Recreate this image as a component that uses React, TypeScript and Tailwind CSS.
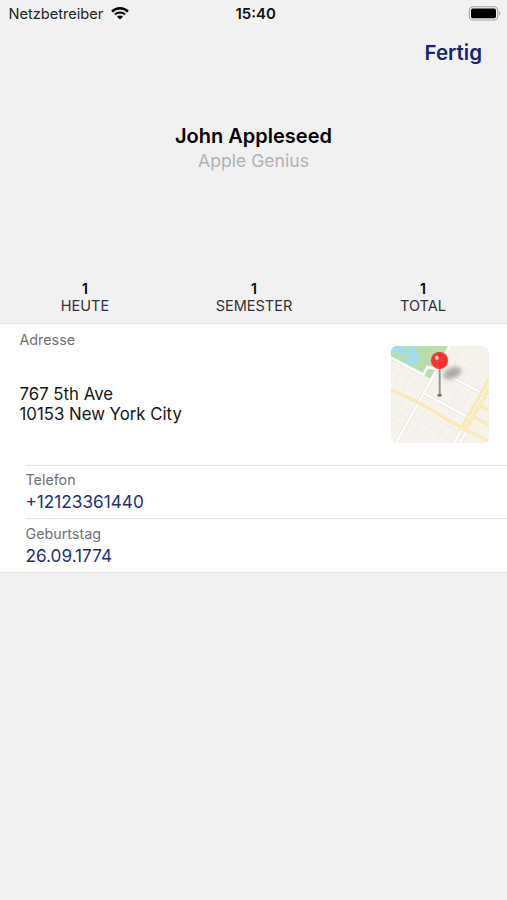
import clsx from "clsx";

interface StatProps {
  value: number;
  label: string;
}

interface DetailRowProps {
  label: string;
  value: string;
  className?: string;
}

const stats: StatProps[] = [
  { value: 1, label: "HEUTE" },
  { value: 1, label: "SEMESTER" },
  { value: 1, label: "TOTAL" },
];

const whiteRoads =
  "M210 33 48 323M33 68 130 119 142 96 166 101 326 184M134 176 270 250M222 323 247 277M240 323 260 285";
const avenues =
  "M33 165Q130 204 207 257L326 319M326 132 240 285M326 162 253 290M298 211 326 226M280 244 326 269";

const WifiIcon: React.FC = () => (
  <svg className="mb-0.5" width="18" height="13" viewBox="0 0 18 13" fill="none">
    <path d="M1 4.6a11.2 11.2 0 0 1 16 0" stroke="#000" strokeWidth="2.3" />
    <path d="M3.9 7.6a7.2 7.2 0 0 1 10.2 0" stroke="#000" strokeWidth="2.1" />
    <path d="M9 12.6 6 9.7a4.2 4.2 0 0 1 6 0z" fill="#000" />
  </svg>
);

const BatteryIcon: React.FC = () => (
  <svg className="mb-0.5" width="33" height="15" viewBox="0 0 33 15" fill="none">
    <rect x="1.3" y="0.8" width="28.4" height="13.2" rx="3.6" fill="#f1f1f1" stroke="#a3a3a3" strokeWidth="1.1" />
    <rect x="3" y="2.6" width="25" height="9.6" rx="1.8" fill="#000" />
    <path d="M31 5.2c1.5.5 1.5 3.9 0 4.4z" fill="#a3a3a3" />
  </svg>
);

const MapPreview: React.FC = () => (
  <svg className="w-[98px] h-[97px] rounded-md" viewBox="33 33 293 290" preserveAspectRatio="none">
    <defs>
      <filter id="pinShadow" x="-50%" y="-50%" width="200%" height="200%">
        <feGaussianBlur stdDeviation="7" />
      </filter>
    </defs>
    <rect x="33" y="33" width="293" height="290" fill="#f6f3ed" />
    {/* park and pond */}
    <path d="M33 33H202L150 130 33 68z" fill="#b8deaa" />
    <path d="M33 33H64L70 43Q78 50 84 42L91 33H108Q107 45 113 57Q122 70 115 81Q105 94 91 87Q75 82 69 74Q72 63 82 68Q92 68 85 58Q73 52 65 60L33 47z" fill="#9fdcee" />
    {/* small streets */}
    <g stroke="#eae7e0" strokeWidth="1.5" fill="none">
      <path d="M222 35 326 89M218 60 323 116M207 82 310 140M33 106 120 151M33 132 101 168M33 196 88 226M33 221 77 245M33 251 64 268M117 225 236 289M103 251 209 308M88 278 168 322" />
      <path d="M246 33 216 99M292 48 248 137M70 89 36 157M99 105 56 187M73 190 33 269M106 208 55 310M139 222 87 322M170 240 129 322M202 258 169 322M213 121 171 205M245 138 202 223M277 156 237 238" />
    </g>
    <path d={whiteRoads} stroke="#e3e0da" strokeWidth="10" fill="none" />
    <path d={whiteRoads} stroke="#fff" strokeWidth="7" fill="none" />
    <path d={avenues} stroke="#f3d68c" strokeWidth="8" fill="none" />
    <path d={avenues} stroke="#fff0bc" strokeWidth="5" fill="none" />
    {/* pin */}
    <ellipse cx="216" cy="114" rx="29" ry="16" transform="rotate(-22 216 114)" fill="#555" opacity="0.45" filter="url(#pinShadow)" />
    <ellipse cx="178" cy="180" rx="7" ry="4.5" fill="#74716d" />
    <path d="M178.5 98V179" stroke="#77787a" strokeWidth="5" />
    <path d="M177.5 98V177" stroke="#b9babb" strokeWidth="1.5" />
    <circle cx="178" cy="76" r="25.5" fill="#fb342e" />
    <circle cx="170" cy="68" r="6" fill="#fff" opacity="0.85" />
  </svg>
);

const Stat: React.FC<StatProps> = ({ value, label }) => (
  <div className="flex flex-col items-center pl-px">
    <span className="text-sm leading-[18px] font-semibold text-black">{value}</span>
    <span className="text-[14.5px] leading-[15px] text-[#333]">{label}</span>
  </div>
);

const DetailRow: React.FC<DetailRowProps> = ({ label, value, className }) => (
  <div className={clsx("ml-[25.5px] border-t border-[#e6e6e6]", className)}>
    <div className="text-[14.3px] leading-[18px] text-[#707070]">{label}</div>
    <div className="text-[17.2px] leading-[25px] text-[#1c2f7c]">{value}</div>
  </div>
);

export default function App() {
  return (
    <div className="flex h-[900px] w-[507px] flex-col overflow-hidden bg-[#f1f1f1] font-['Inter',sans-serif]">
      <div className="grid h-7 shrink-0 grid-cols-3 items-center pl-[8.5px] pr-1.5">
        <div className="flex items-center gap-2 text-[14.6px] leading-6 text-[#222]">
          <span>Netzbetreiber</span>
          <WifiIcon />
        </div>
        <div className="pl-[2px] text-center text-[15px] font-semibold text-[#111]">15:40</div>
        <div className="flex justify-end">
          <BatteryIcon />
        </div>
      </div>

      <div className="flex h-12 shrink-0 items-center justify-end pt-0.5 pr-[25px]">
        <button className="text-[20.5px] font-semibold text-[#14266f]">Fertig</button>
      </div>

      <div className="flex h-[204px] shrink-0 flex-col items-center pt-[47px]">
        <h1 className="text-[20px] leading-[27px] font-semibold text-black">John Appleseed</h1>
        <p className="text-[17.6px] leading-[21px] text-[#b2b2b2]">Apple Genius</p>
      </div>

      <div className="grid h-[43px] shrink-0 grid-cols-3">
        {stats.map((stat) => (
          <Stat key={stat.label} value={stat.value} label={stat.label} />
        ))}
      </div>

      <div className="h-[250px] shrink-0 border-y border-[#e4e4e4] bg-white">
        <div className="flex h-[141px] justify-between pl-[19.5px] pr-[18px]">
          <div className="pt-[7px]">
            <div className="text-[14.3px] leading-[18px] text-[#707070]">Adresse</div>
            <div className="mt-[35px] text-[16.8px] leading-5 text-[#151515]">
              767 5th Ave
              <br />
              10153 New York City
            </div>
          </div>
          <div className="pt-[22px]">
            <MapPreview />
          </div>
        </div>
        <DetailRow label="Telefon" value="+12123361440" className="h-[53px] pt-[5px]" />
        <DetailRow label="Geburtstag" value="26.09.1774" className="h-[54px] pt-1.5" />
      </div>
    </div>
  );
}
